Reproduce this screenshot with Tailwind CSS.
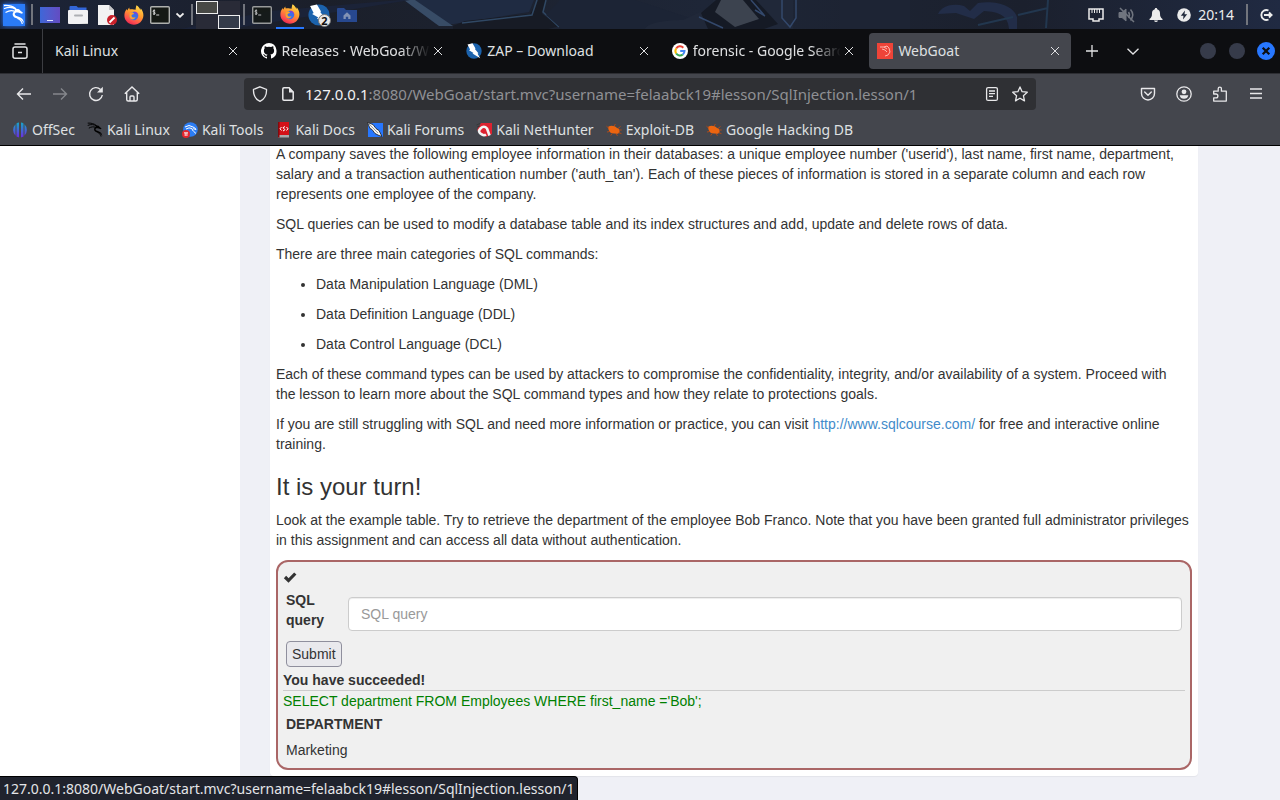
<!DOCTYPE html>
<html lang="en">
<head>
<meta charset="utf-8">
<title>WebGoat</title>
<script src="https://cdn.jsdelivr.net/npm/@tailwindcss/browser@4"></script>
</head>
<body class="h-screen flex flex-col overflow-hidden bg-white font-['Noto_Sans',sans-serif] text-[14px] leading-5 text-[#dfe0e2]">

<svg class="absolute w-0 h-0" aria-hidden="true">
  <defs>
    <linearGradient id="ffa" x1=".8" y1="0" x2=".3" y2="1"><stop offset="0" stop-color="#ffe14d"/><stop offset=".45" stop-color="#ff9a2e"/><stop offset=".8" stop-color="#ff4f4f"/><stop offset="1" stop-color="#e5264f"/></linearGradient>
  </defs>
  <symbol id="close" viewBox="0 0 10 10"><path d="M1 1l8 8M9 1l-8 8" stroke="currentColor" stroke-width="1" fill="none"/></symbol>
  <symbol id="terminal" viewBox="0 0 20 18"><rect x=".7" y=".7" width="18.6" height="16.6" rx="1" fill="#151915" stroke="#aeb0ae" stroke-width="1.4"/><path d="M5.200 4.800c-.6-.9-2.200-.5-2.200.400 0 1.200 2.200.8 2.200 2 0 1-1.700 1.200-2.300.3M4.100 3.500v5.500M6.200 9h3" stroke="#e8e8e8" stroke-width=".9" fill="none"/></symbol>
  <symbol id="firefox" viewBox="0 0 20 20">
    <path d="M12.500.3c2.200 1.200 3.200 3 3.700 4.400.5-.2.500-.9.400-1.500 1.800 2 3 4.600 2.800 7.500-.3 5-4.500 9-9.500 9S.6 15.800.4 11c-.1-2.800.8-5.300 2.400-7 .1.700.3 1.200.6 1.600.3-1 .9-2.200 1.900-3.100 0 .8.100 1.400.5 1.900 1.800-.1 4.300-.1 5.500.6C11.900 3.800 11.800 1.900 12.500.3z" fill="url(#ffa)"/>
    <circle cx="9.800" cy="11" r="4.300" fill="#3b6fe8"/><path d="M5.400 11.500C4.900 8.500 6.500 7 8.400 7.200l1.800 1.500c-1 .9-2.800.6-2.700 2 .2 2 2.900 2.300 4 1.200-.5 3.200-5.400 3.600-6.100-.4z" fill="#ffa12e"/><path d="M10 6.700c2.600-.2 4.600 1.700 4.300 4.800-.9-2.400-2-3-4.300-3.200z" fill="#7d3fdb"/>
  </symbol>
  <symbol id="zap" viewBox="0 0 16 16"><circle cx="8" cy="8" r="7.700" fill="#1b62ac"/><path d="M1.500 1.500L6.500.3 9.500 5.500l-.6.400 3.500 4.400-.8.500 2.600 4.400L6.500 10.500l1-.6L3 7.300l1.100-.7z" fill="#fff"/></symbol>
  <symbol id="dragon" viewBox="0 0 22 22"><path d="M1.500 4.500C5.500 3 9.500 3 13 5.500M3 8.200c3-1.800 6-2 8.500-1M1.500 1.500c4-.2 8 .6 11 3" fill="none" stroke="currentColor" stroke-width="1.300" stroke-linecap="round"/><path d="M12 4.500l4 .8 1.500 1.500 2.500 2-1 1-4-1.300c-2-.3-3.300.4-3.300 1.600.1 1.600 2 2 4 2.600 3.300 1 5 3 5.300 6.800-1.300-2.800-3-4-5.700-4.600-3.300-.8-5.800-2-5.600-4.800.1-1.700.9-2.600 2.300-3.200z" fill="currentColor"/><path d="M14.500 14.500c2.700 1 4.300 2.600 4.800 5.500" fill="none" stroke="currentColor" stroke-width="1.200"/></symbol>
  <symbol id="beetle" viewBox="0 0 16 14"><path d="M2.500 3.500C5 2.200 9 2.700 11 5c2 .5 3 2 2.500 4.200-1 1.700-2.800 1.800-4.300 1.300C6 11 3.500 9.500 3 7.500 2.200 6 2 4.700 2.500 3.500z" fill="#ed6510"/><path d="M2.500 5L.5 3.200M3.500 8.500L1 9M6 10.500l-1.200 2M10 10.500l1.500 2.400M12.500 9.500l3 1.200M12 5.500l2.500-2M8 3l1.500-2M13 7h2.700" stroke="#c94a0a" stroke-width=".8" fill="none"/></symbol>
</svg>

<!-- Desktop panel -->
<header class="relative isolate h-[29px] shrink-0 flex items-center bg-[#1c202c] overflow-hidden">
  <svg class="absolute inset-0 -z-10 w-full h-full" viewBox="0 0 1280 29" preserveAspectRatio="none" aria-hidden="true">
    <defs><linearGradient id="wall"><stop offset="0" stop-color="#1c2438"/><stop offset=".25" stop-color="#1b1f2a"/><stop offset=".55" stop-color="#1e2637"/><stop offset=".8" stop-color="#1b202d"/><stop offset="1" stop-color="#202a42"/></linearGradient></defs>
    <rect width="1280" height="29" fill="url(#wall)"/>
    <path d="M404 0h130l-5 12-75 12h-18z" fill="#1f2b42"/>
    <path d="M404 0l35 26h14l-38-26z" fill="#384c66"/>
    <path d="M453 26l12-5 65-7 8-14h8l-4 14 18 12-12 3h-95z" fill="#171b25"/>
    <path d="M462 23l70-8 5-15M546 0l-3 12 16 15" fill="none" stroke="#304864" stroke-width="1.500"/>
    <path d="M560 0h75l55 18-15 11H562l-16-14z" fill="#1c2435"/>
    <path d="M645 29c2-6 20-9 38-9l30-14V0h80v29z" fill="#202839"/>
    <path d="M701 13l15-13h40l22 24-14 5h-56z" fill="#151a25"/>
    <path d="M721 0h22l16 19-24 8-20-15z" fill="#3c434f"/>
    <path d="M699 17l24 11M751 0l13 15M755 10l10 6M782 0v18l8 9 6-9V0" fill="none" stroke="#33486b" stroke-width="1.500"/>
    <path d="M840 0h70v29h-70z" fill="#1d2434"/>
    <path d="M938 14c4-9 16-11 26-8l6 5 8-8c18-3 36 3 39 14v12h-8c-1-14-10-17-25-18l-10 8-18-6z" fill="#222d48"/>
    <path d="M978 25l35-8M1018 15l30-7M1048 0l-2 28" fill="none" stroke="#22374f" stroke-width="2"/>
    <path d="M180 29l90-18 130-11h10L230 29z" fill="#1b2338"/>
  </svg>
  <nav aria-label="Panel" class="flex items-center h-full">
    <button aria-label="Applications" class="ml-[3px] size-[22px] bg-[#2a7bf8] text-white shadow-[0_0_5px_#2777ff]"><svg class="size-[22px]"><use href="#dragon"/></svg></button>
    <span class="ml-[6px] w-[2px] h-[21px] bg-[#72757d]"></span>
    <button aria-label="Show desktop" class="ml-[7px] w-5 h-4 bg-gradient-to-r from-[#3c67d8] to-[#634cc2]"><svg viewBox="0 0 20 16"><path d="M7 13.500h6" stroke="#dce2ff" stroke-width="1"/></svg></button>
    <button aria-label="Files" class="ml-[8px] w-5 h-[18px]"><svg viewBox="0 0 20 18"><path d="M1.500 7V1q0-1 1-1h6l1.500 1.500h8.500v6z" fill="#3266d9"/><rect y="4" width="20" height="14" rx="1" fill="#f1f1f3"/><path d="M20 17L11 18h9z" fill="#ccc"/><rect x="6" y="8.500" width="9" height="2" rx="1" fill="#adafb4"/></svg></button>
    <button aria-label="Text editor" class="ml-[9px] w-[21px] h-5"><svg viewBox="0 0 21 20"><path d="M1 0h11l5 5v15H1z" fill="#f2f2f2"/><path d="M12 0v5h5z" fill="#c5c5c8"/><circle cx="15" cy="15" r="5" fill="#c9202a"/><path d="M12.500 17.500l5-5" stroke="#fff" stroke-width="1.800"/></svg></button>
    <button aria-label="Firefox" class="ml-[6px] size-5"><svg class="size-5"><use href="#firefox"/></svg></button>
    <button aria-label="Terminal" class="ml-[6px] w-5 h-[18px]"><svg class="w-5 h-[18px]"><use href="#terminal"/></svg></button>
    <button aria-label="More terminals" class="ml-[6px] w-2 h-[6px]"><svg viewBox="0 0 8 6"><path d="M.5 1.500L4 4.700l3.500-3.200" fill="none" stroke="#eee" stroke-width="1.800"/></svg></button>
    <span class="ml-[7px] w-[2px] h-[21px] bg-[#72757d]"></span>
    <button aria-label="Workspaces" class="ml-[3px] w-11 h-7 grid grid-cols-2 grid-rows-2 bg-[#292b37]"><span class="border border-[#eee] bg-[#484945] mb-px"></span><span></span><span></span><span class="border border-[#eee] bg-[#343b49]"></span></button>
    <span class="ml-[3px] w-[2px] h-[21px] bg-[#72757d]"></span>
    <button aria-label="Terminal window" class="ml-[7px] w-5 h-[18px] opacity-85"><svg class="w-5 h-[18px]"><use href="#terminal"/></svg></button>
    <button aria-label="Firefox window" class="ml-[4px] w-7 h-7 flex justify-center items-center border-b-2 border-[#2777ff]"><svg class="size-5"><use href="#firefox"/></svg></button>
    <button aria-label="ZAP windows" class="relative ml-[4px] size-[22px]"><svg class="size-[22px]"><use href="#zap"/></svg><span class="absolute left-[10px] top-[10px] size-[13px] rounded-full bg-[#e8e8e8] border border-[#777] text-[#111] text-[11px] leading-[11px] font-bold text-center">2</span></button>
    <button aria-label="Home folder" class="ml-[7px] w-5 h-[14px]"><svg viewBox="0 0 20 14"><path d="M0 1q0-1 1-1h6l2 2h11v12H0z" fill="#27488f"/><path d="M6.500 7.500L10 4.300l3.500 3.200V11h-2.300V8.800H8.800V11H6.500z" fill="#8292b5"/></svg></button>
  </nav>
  <div class="ml-auto flex items-center pr-[7px] text-[#ececec]">
    <svg class="w-4 h-[14px]" viewBox="0 0 16 14" fill="none" stroke="currentColor"><path d="M1 1h14v10h-4v2H5v-2H1z" stroke-width="1.500"/><path d="M4 1v4M6.500 1v4M9 1v4M11.500 1v4"/></svg>
    <svg class="ml-[14px] w-[18px] h-4 text-[#70757f]" viewBox="0 0 18 16" fill="none" stroke="currentColor"><path d="M1 5.500h3l4-3.500v12l-4-3.500H1z" fill="currentColor"/><path d="M10.500 5q2 3 0 6M12.500 2.500q4.500 5 0 11M2 1l14 14" stroke-width="1.500"/></svg>
    <svg class="ml-[13px] w-[14px] h-[14px]" viewBox="0 0 14 14" fill="currentColor"><path d="M7 0c.8 0 1.200.6 1.200 1.200C10.300 1.800 11 3.400 11 5.500c0 3 .7 4 2.500 5.500v1H.5v-1C2.300 9.500 3 8.500 3 5.500 3 3.400 3.700 1.800 5.800 1.200 5.800.6 6.200 0 7 0zM5 12.500h4q-.5 1.500-2 1.500t-2-1.500z"/></svg>
    <svg class="ml-[14px] size-[14px]" viewBox="0 0 14 14"><circle cx="7" cy="7" r="6.800" fill="currentColor"/><path d="M8 2.500L3.800 7.700h2.700L6 11.500l4.200-5.200H7.500z" fill="#20283a"/></svg>
    <time class="ml-[7px] text-[14px] leading-5">20:14</time>
    <span class="ml-[12px] w-[2px] h-[21px] bg-[#72757d]"></span>
    <button aria-label="Log out" class="ml-[11px] size-[14px]"><svg viewBox="0 0 14 14" fill="none" stroke="currentColor" stroke-width="1.900"><path d="M9.500 2.500A5 5 0 1 0 9.500 11.500M5 7h7M10 4.500L12.600 7 10 9.500"/></svg></button>
  </div>
</header>

<!-- Tab strip -->
<div class="h-[45px] shrink-0 flex items-center bg-[#0d0e11] border-b border-[#2d2e33]">
  <button aria-label="Recent browsing" class="w-[42px] h-full flex items-center justify-center pr-[2px]"><svg class="w-4 h-4" viewBox="0 0 16 16" fill="none" stroke="#e2e3e5" stroke-width="1.500"><path d="M3 1h10" stroke-linecap="round"/><rect x="1" y="4" width="14" height="11.200" rx="2"/><path d="M6 9.500h4"/></svg></button>
  <span class="w-px h-full bg-[#3c3d42] mr-[4px]"></span>
  <div class="flex-1 flex gap-1">
    <div class="flex-1 basis-0 min-w-0 h-9 px-2 flex items-center"><a href="#kali" class="flex-1 min-w-0 overflow-hidden whitespace-nowrap">Kali Linux</a><button aria-label="Close Kali Linux" class="w-4 flex justify-center"><svg class="size-[10px]"><use href="#close"/></svg></button></div>
    <div class="flex-1 basis-0 min-w-0 h-9 px-2 flex items-center"><svg class="size-4 mr-[5px] shrink-0" viewBox="0 0 16 16"><path fill="#fff" d="M8 0a8 8 0 0 0-2.500 15.600c.4.100.5-.2.500-.4v-1.500c-2.200.5-2.700-1-2.700-1-.4-.9-.9-1.200-.9-1.200-.7-.5.100-.5.100-.5.800.1 1.200.8 1.200.8.700 1.300 1.900.9 2.300.7.100-.5.300-.9.500-1.100-1.800-.2-3.600-.9-3.600-4 0-.9.300-1.600.8-2.100-.1-.2-.4-1 .1-2.100 0 0 .7-.2 2.200.8a7.600 7.600 0 0 1 4 0c1.500-1 2.200-.8 2.200-.8.400 1.100.2 1.900.1 2.100.5.600.8 1.300.8 2.100 0 3.100-1.900 3.700-3.700 3.900.3.300.6.800.6 1.500v2.200c0 .2.100.5.500.4A8 8 0 0 0 8 0z"/></svg><a href="#releases" class="flex-1 min-w-0 overflow-hidden whitespace-nowrap [mask-image:linear-gradient(to_right,#000_80%,transparent)]">Releases · WebGoat/WebGoat</a><button aria-label="Close Releases" class="w-4 flex justify-center"><svg class="size-[10px]"><use href="#close"/></svg></button></div>
    <div class="flex-1 basis-0 min-w-0 h-9 px-2 flex items-center"><svg class="size-4 mr-[5px] shrink-0"><use href="#zap"/></svg><a href="#zapdl" class="flex-1 min-w-0 overflow-hidden whitespace-nowrap">ZAP – Download</a><button aria-label="Close ZAP" class="w-4 flex justify-center"><svg class="size-[10px]"><use href="#close"/></svg></button></div>
    <div class="flex-1 basis-0 min-w-0 h-9 px-2 flex items-center"><svg class="size-4 mr-[5px] shrink-0" viewBox="0 0 16 16"><circle cx="8" cy="8" r="8" fill="#fff"/><g fill="none" stroke-width="2"><path d="M4.200 5.500A4.500 4.500 0 0 1 11.300 4.700" stroke="#ea4335"/><path d="M4.200 5.500a4.500 4.500 0 0 0 0 5" stroke="#fbbc05"/><path d="M4.200 10.500a4.500 4.500 0 0 0 6.600 1" stroke="#34a853"/><path d="M10.800 11.500A4.500 4.500 0 0 0 12.500 8H8.200" stroke="#4285f4"/></g></svg><a href="#google" class="flex-1 min-w-0 overflow-hidden whitespace-nowrap [mask-image:linear-gradient(to_right,#000_80%,transparent)]">forensic - Google Search</a><button aria-label="Close Google Search" class="w-4 flex justify-center"><svg class="size-[10px]"><use href="#close"/></svg></button></div>
    <div class="flex-1 basis-0 min-w-0 h-9 px-2 flex items-center rounded bg-[#44464d]"><svg class="size-4 mr-[5px] shrink-0" viewBox="0 0 16 16"><path fill="#ee4438" d="M0 0h16v16H0z"/><path d="M3 4l4 0 3-1 2 2 1 4-2 3-3 1M5 6l3 1 2 2M7 4l3 2" fill="none" stroke="#ffc4bc" stroke-width=".9"/></svg><a href="#webgoat" class="flex-1 min-w-0 overflow-hidden whitespace-nowrap">WebGoat</a><button aria-label="Close WebGoat" class="w-4 flex justify-center"><svg class="size-[10px]"><use href="#close"/></svg></button></div>
  </div>
  <div class="flex items-center w-[209px] pl-[15px] pr-[5px]">
    <button aria-label="New tab" class="size-3"><svg viewBox="0 0 12 12"><path d="M6 0v12M0 6h12" stroke="#e2e3e5" stroke-width="1.300"/></svg></button>
    <button aria-label="List tabs" class="ml-[29px] w-3 h-[7px]"><svg viewBox="0 0 12 7"><path d="M.5.700L6 6 11.500.700" fill="none" stroke="#e2e3e5" stroke-width="1.300"/></svg></button>
    <button aria-label="Minimise" class="ml-auto size-4 rounded-full bg-[#363b4a]"></button>
    <button aria-label="Maximise" class="ml-[13px] size-4 rounded-full bg-[#363b4a]"></button>
    <button aria-label="Close window" class="ml-[12px] size-[18px] rounded-full bg-[#2777ff]"><svg viewBox="0 0 18 18"><path d="M5.700 5.700l6.600 6.600M12.300 5.700l-6.600 6.600" stroke="#0d0e11" stroke-width="2.200"/></svg></button>
  </div>
</div>

<!-- Toolbar -->
<div class="h-10 shrink-0 flex items-center bg-[#44464d]">
  <div class="w-[244px] pl-4 flex gap-5 text-[#e8e8ea]">
    <button aria-label="Back" class="size-4"><svg viewBox="0 0 16 16" fill="none" stroke="currentColor" stroke-width="1.400"><path d="M15 8H1.500M7 2.500L1.500 8 7 13.500"/></svg></button>
    <button aria-label="Forward" class="size-4 text-[#85878c]"><svg viewBox="0 0 16 16" fill="none" stroke="currentColor" stroke-width="1.400"><path d="M1 8h13.500M9 2.500L14.500 8 9 13.500"/></svg></button>
    <button aria-label="Reload" class="size-4"><svg viewBox="0 0 16 16" fill="none" stroke="currentColor" stroke-width="1.400"><path d="M12.500 3.500A6.400 6.400 0 1 0 14.300 9"/><path d="M14.800.8v5.700H9z" fill="currentColor" stroke="none"/></svg></button>
    <button aria-label="Home" class="size-4"><svg viewBox="0 0 16 16" fill="none" stroke="currentColor" stroke-width="1.400"><path d="M.8 7.800L8 1l7.200 6.800M2.700 6.500v7q0 1.500 1.500 1.500h7.600q1.500 0 1.500-1.500v-7M6 15v-4q0-1 1-1h2q1 0 1 1v4"/></svg></button>
  </div>
  <div class="flex-1 min-w-0 h-8 px-2 flex items-center rounded bg-[#2f3034] text-[#e8e8ea]">
    <svg class="size-4 shrink-0" viewBox="0 0 16 16" fill="none" stroke="currentColor" stroke-width="1.300"><path d="M8 .8l6.500 2.600c.3 5-1.500 9.500-6.500 12C3 12.900 1.200 8.400 1.500 3.400z"/></svg>
    <svg class="ml-3 size-4 shrink-0" viewBox="0 0 16 16" fill="none" stroke="currentColor" stroke-width="1.500"><path d="M9 1.800H4q-1.200 0-1.200 1.200v10q0 1.200 1.200 1.200h8q1.200 0 1.200-1.200V6z"/><path d="M9 1v5.500h5.200z" fill="currentColor" stroke="none"/></svg>
    <a href="#lesson" class="ml-[9px] flex-1 whitespace-nowrap text-[15px] text-[#8f9094]"><span class="text-[#f2f2f3]">127.0.0.1</span>:8080/WebGoat/start.mvc?username=felaabck19#lesson/SqlInjection.lesson/1</a>
    <button aria-label="Reader view" class="size-4"><svg viewBox="0 0 16 16" fill="none" stroke="currentColor" stroke-width="1.300"><rect x="2.600" y="1.600" width="10.800" height="12.800" rx="1.500"/><path d="M5 5h6M5 7.700h6M5 10.400h4"/></svg></button>
    <button aria-label="Bookmark this page" class="ml-3 size-4"><svg viewBox="0 0 16 16" fill="none" stroke="currentColor" stroke-width="1.300" stroke-linejoin="round"><path d="M8 .9l2.100 4.800 5.200.5-3.900 3.500 1.100 5.200L8 12.200l-4.500 2.700 1.100-5.200L.7 6.200l5.200-.5z"/></svg></button>
  </div>
  <div class="w-[244px] pr-4 flex justify-end gap-5 text-[#e8e8ea]">
    <button aria-label="Pocket" class="size-4"><svg viewBox="0 0 16 16" fill="none" stroke="currentColor" stroke-width="1.400" stroke-linejoin="round"><path d="M1.500 2.500h13v5a6.500 6.500 0 0 1-13 0z"/><path d="M4.700 6L8 9.200 11.300 6" stroke-linecap="round"/></svg></button>
    <button aria-label="Account" class="size-4"><svg viewBox="0 0 16 16" fill="none" stroke="currentColor" stroke-width="1.300"><circle cx="8" cy="8" r="7.200"/><circle cx="8" cy="5.800" r="2.400" fill="currentColor" stroke="none"/><path d="M3.700 9.200h8.600q-.6 3.600-4.300 3.600T3.700 9.200z" fill="currentColor" stroke="none"/></svg></button>
    <button aria-label="Extensions" class="size-4"><svg viewBox="0 0 16 16" fill="none" stroke="currentColor" stroke-width="1.300" stroke-linejoin="round"><path d="M1.700 8V5.200h4.500V2.700a1.600 1.600 0 0 1 3.200 0v2.500h4.900v9.900H1.700v-3.300H4a1.900 1.900 0 0 0 0-3.800z"/></svg></button>
    <button aria-label="Menu" class="size-4"><svg viewBox="0 0 16 16"><path d="M2 3h12M2 7.500h12M2 12h12" stroke="currentColor" stroke-width="1.300"/></svg></button>
  </div>
</div>

<!-- Bookmarks -->
<nav aria-label="Bookmarks" class="h-8 shrink-0 flex items-center gap-3 pl-3 whitespace-nowrap bg-[#44464d] border-b border-black">
  <a href="#offsec" class="flex items-center gap-1"><svg class="size-4" viewBox="0 0 16 16"><defs><linearGradient id="os" x2="0" y2="1"><stop offset="0" stop-color="#16a5c8"/><stop offset="1" stop-color="#6c2be2"/></linearGradient></defs><path d="M3.500 2.300v11.400A8 8 0 0 1 3.500 2.300zM4.500 1.500Q5.600.8 7 .6v14.800q-1.400-.2-2.500-.9zM9 .6q1.400.2 2.500.9v13q-1.100.7-2.500.9zM12.500 2.300a8 8 0 0 1 0 11.400z" fill="url(#os)"/></svg>OffSec</a>
  <a href="#kalilinux" class="flex items-center gap-1"><svg class="size-4 text-black"><use href="#dragon"/></svg>Kali Linux</a>
  <a href="#tools" class="flex items-center gap-1"><svg class="size-4" viewBox="0 0 16 16"><circle cx="8.500" cy="7.500" r="7.300" fill="#2b7df5"/><path d="M3 5q4-3 8 0 2 .5 3 2.500-3-1.500-4 0 1 1.500 4 4M4 7q3-2 6-.5" fill="none" stroke="#fff" stroke-width="1"/><circle cx="4" cy="12" r="4" fill="#e5262c"/><path d="M2 10.800h4M3.200 11v3M4.900 11v3" stroke="#fff" stroke-width=".9"/></svg>Kali Tools</a>
  <a href="#docs" class="flex items-center gap-1"><svg class="size-4" viewBox="0 0 16 16"><path d="M3 0h11v13H3z" fill="#d31118"/><path d="M3 13h11v2.500H3z" fill="#a8a8aa"/><path d="M3 0h1.500v15.500H3z" fill="#86090d"/><path d="M6.500 5L5 6.800l1.500 1.700M11.500 5L13 6.800l-1.500 1.700M10 4.500L8 5.700l2 2L8 9" stroke="#fff" stroke-width="1" fill="none"/></svg>Kali Docs</a>
  <a href="#forums" class="flex items-center gap-1"><svg class="size-4" viewBox="0 0 16 16"><path d="M1 1h15v14H1z" fill="#2777ff"/><path d="M.5.500l5.500 2 3 4 3 2 3 6-3-1-4-2-3-4-2-1z" fill="#f4f4f4" stroke="#1b1b1b" stroke-width=".8"/><path d="M2 2l9 9" stroke="#777" stroke-width=".7"/></svg>Kali Forums</a>
  <a href="#nethunter" class="flex items-center gap-1"><svg class="size-4" viewBox="0 0 16 16"><path d="M5 1h11v11L10 15 1 8z" fill="#dd2230"/><path d="M.5 3L4 1.500M1 5l3-1" stroke="#333" stroke-width=".8"/><path d="M13.500 13.500L11 6.500Q8 3 4.500 6.500T6 12.500q2 1.500 4 0" fill="none" stroke="#f4f4f4" stroke-width="2.600"/></svg>Kali NetHunter</a>
  <a href="#exploitdb" class="flex items-center gap-1"><svg class="w-4 h-[14px]"><use href="#beetle"/></svg>Exploit-DB</a>
  <a href="#ghdb" class="flex items-center gap-1"><svg class="w-4 h-[14px]"><use href="#beetle"/></svg>Google Hacking DB</a>
</nav>

<!-- Page -->
<div class="relative flex-1 min-h-0 flex font-['Liberation_Sans',sans-serif] text-[#333]">
  <aside class="w-60 shrink-0 bg-white"></aside>
  <main class="flex-1 min-w-0 overflow-hidden flex flex-col justify-end bg-[#eff0f6] pl-[30px] pr-[82px] pb-6">
    <article class="bg-white rounded-b p-[6px] shadow-[0_1px_1px_#0000000d] flex flex-col gap-[10px]">
      <p>A company saves the following employee information in their databases: a unique employee number ('userid'), last name, first name, department, salary and a transaction authentication number ('auth_tan'). Each of these pieces of information is stored in a separate column and each row represents one employee of the company.</p>
      <p>SQL queries can be used to modify a database table and its index structures and add, update and delete rows of data.</p>
      <p>There are three main categories of SQL commands:</p>
      <ul class="list-disc pl-10 flex flex-col gap-[10px]">
        <li>Data Manipulation Language (DML)</li>
        <li>Data Definition Language (DDL)</li>
        <li>Data Control Language (DCL)</li>
      </ul>
      <p class="pr-2">Each of these command types can be used by attackers to compromise the confidentiality, integrity, and/or availability of a system. Proceed with the lesson to learn more about the SQL command types and how they relate to protections goals.</p>
      <p>If you are still struggling with SQL and need more information or practice, you can visit <a href="#sqlcourse" class="text-[#428bca]">http://www.sqlcourse.com/</a> for free and interactive online training.</p>
      <h2 class="mt-[10px] text-2xl leading-[26px]">It is your turn!</h2>
      <p>Look at the example table. Try to retrieve the department of the employee Bob Franco. Note that you have been granted full administrator privileges in this assignment and can access all data without authentication.</p>
      <section class="border-2 border-[#a66] rounded-xl bg-[#f0f0f0] p-[5px]">
        <svg class="w-[14px] h-5" viewBox="0 0 14 20" aria-label="Solved"><path d="M2 10l3.500 3.500L12.300 6.500" fill="none" stroke="#333" stroke-width="3.200"/></svg>
        <form class="px-[3px]" onsubmit="return false">
          <div class="flex items-end pt-[3px]">
            <label for="query" class="w-[62px] pr-4 pb-px font-bold">SQL query</label>
            <input id="query" type="text" placeholder="SQL query" class="flex-1 min-w-0 h-[34px] px-3 bg-white border border-[#ccc] rounded shadow-[inset_0_1px_1px_#00000013] placeholder:text-[#999]">
          </div>
          <button class="block mt-[10px] mb-[3px] h-[26px] px-[5px] border border-[#8f8f9d] rounded bg-[#e9e9ed]">Submit</button>
        </form>
        <p class="font-bold">You have succeeded!</p>
        <p class="border-t border-[#ccc] text-[#008000]">SELECT department FROM Employees WHERE first_name ='Bob';</p>
        <table class="ml-[3px]">
          <thead><tr><th class="py-[3px] text-left">DEPARTMENT</th></tr></thead>
          <tbody><tr><td class="py-[3px]">Marketing</td></tr></tbody>
        </table>
      </section>
    </article>
  </main>
  <div class="absolute left-0 bottom-0 h-6 pl-[3px] pr-[2px] flex items-center border-t border-r border-black rounded-tr bg-[#20232d] text-[#e4e5e8] font-['Noto_Sans',sans-serif]">127.0.0.1:8080/WebGoat/start.mvc?username=felaabck19#lesson/SqlInjection.lesson/1</div>
</div>
</body>
</html>
